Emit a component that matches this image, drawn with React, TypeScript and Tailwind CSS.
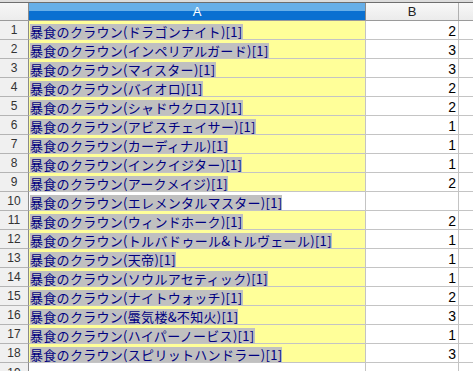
import React from "react";

const rows: [string, string, boolean][] = [
  ["暴食のクラウン(ドラゴンナイト)[1]", "2", true],
  ["暴食のクラウン(インペリアルガード)[1]", "3", true],
  ["暴食のクラウン(マイスター)[1]", "3", true],
  ["暴食のクラウン(バイオロ)[1]", "2", true],
  ["暴食のクラウン(シャドウクロス)[1]", "2", true],
  ["暴食のクラウン(アビスチェイサー)[1]", "1", true],
  ["暴食のクラウン(カーディナル)[1]", "1", true],
  ["暴食のクラウン(インクイジター)[1]", "1", true],
  ["暴食のクラウン(アークメイジ)[1]", "2", true],
  ["暴食のクラウン(エレメンタルマスター)[1]", "", false],
  ["暴食のクラウン(ウィンドホーク)[1]", "2", true],
  ["暴食のクラウン(トルバドゥール&トルヴェール)[1]", "1", true],
  ["暴食のクラウン(天帝)[1]", "1", true],
  ["暴食のクラウン(ソウルアセティック)[1]", "1", true],
  ["暴食のクラウン(ナイトウォッチ)[1]", "2", true],
  ["暴食のクラウン(蜃気楼&不知火)[1]", "3", true],
  ["暴食のクラウン(ハイパーノービス)[1]", "1", true],
  ["暴食のクラウン(スピリットハンドラー)[1]", "3", true],
];

export default function App() {
  return (
    <div className="w-[473px] h-[371px] overflow-hidden bg-white font-['Liberation_Sans',Arial,sans-serif]">
      <div className="h-[2px] bg-[#dcdcdc]" />
      <div className="h-px bg-[#6e6e6e]" />
      {/* header */}
      <div className="flex h-[18px] border-b border-[#9a9a9a]">
        <div className="w-[29px] shrink-0 border-r border-[#8a8a8a] bg-[linear-gradient(to_bottom,#f6f6f6,#ececec)]" />
        <div className="w-[337px] shrink-0 border-r border-[#8a8a8a] bg-[linear-gradient(to_bottom,#67afe8_50%,#0a70d1_50%)] flex items-center justify-center text-white text-[13px] leading-none">
          A
        </div>
        <div className="w-[93px] shrink-0 border-r border-[#b0b0b0] bg-[linear-gradient(to_bottom,#f8f8f8,#ebebeb)] flex items-center justify-center text-[#222] text-[13px] leading-none">
          B
        </div>
        <div className="flex-1 bg-[linear-gradient(to_bottom,#f8f8f8,#ebebeb)]" />
      </div>
      {rows.map(([name, val, yellow], i) => (
        <div key={i} className="flex h-[19px]">
          <div className="w-[29px] shrink-0 border-r border-b border-r-[#8a8a8a] border-b-[#b4b4b4] bg-[#f0f0f0] flex items-center justify-center text-[12px] text-[#333] leading-none">
            {i + 1}
          </div>
          <div
            className={`w-[337px] shrink-0 border-r border-b border-[#c4c4c4] pt-[3px] pl-[1px] flex ${
              yellow ? "bg-[#ffff99]" : "bg-white"
            }`}
          >
            <span className="h-[15px] bg-[#c0c0c0] text-[#000080] text-[13px] leading-[15px] tracking-[0.3px] whitespace-nowrap font-['Noto_Sans_CJK_JP',sans-serif]">
              {name}
            </span>
          </div>
          <div className="w-[93px] shrink-0 border-r border-b border-[#c4c4c4] flex items-center justify-end pr-[2px] text-[14px] text-black leading-none pt-[1px]">
            {val}
          </div>
          <div className="flex-1 border-b border-[#c4c4c4]" />
        </div>
      ))}
      <div className="flex h-[19px]">
        <div className="w-[29px] shrink-0 border-r border-[#8a8a8a] bg-[#f0f0f0] flex items-center justify-center text-[12px] text-[#333] leading-none">
          19
        </div>
        <div className="w-[337px] shrink-0 border-r border-[#c4c4c4]" />
        <div className="w-[93px] shrink-0 border-r border-[#c4c4c4]" />
        <div className="flex-1" />
      </div>
    </div>
  );
}
